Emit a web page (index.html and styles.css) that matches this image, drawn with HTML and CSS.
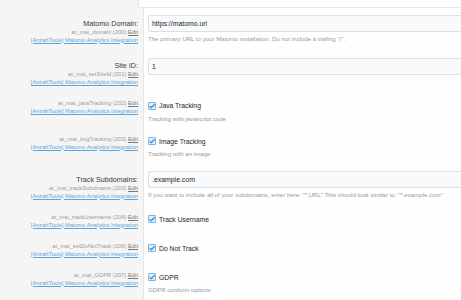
FILE: index.html
```html
<!DOCTYPE html>
<html>
<head>
<meta charset="utf-8">
<link rel="stylesheet" href="styles.css">
</head>
<body>
<div class="form">
  <div class="row top"><div class="lcol"></div><div class="rcol"></div></div>

  <div class="row">
    <div class="lcol">
      <div class="label">Matomo Domain:</div>
      <div class="sub">at_mai_domain (200) <span class="edit">Edit</span></div>
      <div class="addon">[AnzahTools] Matomo Analytics Integration</div>
    </div>
    <div class="rcol">
      <div class="input">https://matomo.url</div>
      <div class="explain">The primary URL to your Matomo installation. Do not include a trailing "/".</div>
    </div>
  </div>

  <div class="row">
    <div class="lcol">
      <div class="label">Site ID:</div>
      <div class="sub">at_mai_setSiteId (201) <span class="edit">Edit</span></div>
      <div class="addon">[AnzahTools] Matomo Analytics Integration</div>
    </div>
    <div class="rcol">
      <div class="input">1</div>
    </div>
  </div>

  <div class="row">
    <div class="lcol nolabel">
      <div class="sub">at_mai_javaTracking (202) <span class="edit">Edit</span></div>
      <div class="addon">[AnzahTools] Matomo Analytics Integration</div>
    </div>
    <div class="rcol">
      <div class="check"><span class="box"><svg viewBox="0 0 8 8" width="8" height="8"><path d="M1.6 4.1 L3.3 5.8 L6.6 2.2" fill="none" stroke="#3d8fd1" stroke-width="1.3"/></svg></span>Java Tracking</div>
      <div class="explain">Tracking with javascript code</div>
    </div>
  </div>

  <div class="row">
    <div class="lcol nolabel">
      <div class="sub">at_mai_imgTracking (203) <span class="edit">Edit</span></div>
      <div class="addon">[AnzahTools] Matomo Analytics Integration</div>
    </div>
    <div class="rcol">
      <div class="check"><span class="box"><svg viewBox="0 0 8 8" width="8" height="8"><path d="M1.6 4.1 L3.3 5.8 L6.6 2.2" fill="none" stroke="#3d8fd1" stroke-width="1.3"/></svg></span>Image Tracking</div>
      <div class="explain">Tracking with an image</div>
    </div>
  </div>

  <div class="row">
    <div class="lcol">
      <div class="label">Track Subdomains:</div>
      <div class="sub">at_mai_trackSubdmains (203) <span class="edit">Edit</span></div>
      <div class="addon">[AnzahTools] Matomo Analytics Integration</div>
    </div>
    <div class="rcol">
      <div class="input">.example.com</div>
      <div class="explain">If you want to include all of your subdomains, enter here: "*.URL" This should look similar to: "*.example.com"</div>
    </div>
  </div>

  <div class="row">
    <div class="lcol nolabel">
      <div class="sub">at_mai_trackUsername (204) <span class="edit">Edit</span></div>
      <div class="addon">[AnzahTools] Matomo Analytics Integration</div>
    </div>
    <div class="rcol">
      <div class="check"><span class="box"><svg viewBox="0 0 8 8" width="8" height="8"><path d="M1.6 4.1 L3.3 5.8 L6.6 2.2" fill="none" stroke="#3d8fd1" stroke-width="1.3"/></svg></span>Track Username</div>
    </div>
  </div>

  <div class="row">
    <div class="lcol nolabel">
      <div class="sub">at_mai_setDoNotTrack (206) <span class="edit">Edit</span></div>
      <div class="addon">[AnzahTools] Matomo Analytics Integration</div>
    </div>
    <div class="rcol">
      <div class="check"><span class="box"><svg viewBox="0 0 8 8" width="8" height="8"><path d="M1.6 4.1 L3.3 5.8 L6.6 2.2" fill="none" stroke="#3d8fd1" stroke-width="1.3"/></svg></span>Do Not Track</div>
    </div>
  </div>

  <div class="row">
    <div class="lcol nolabel">
      <div class="sub">at_mai_GDPR (207) <span class="edit">Edit</span></div>
      <div class="addon">[AnzahTools] Matomo Analytics Integration</div>
    </div>
    <div class="rcol">
      <div class="check"><span class="box"><svg viewBox="0 0 8 8" width="8" height="8"><path d="M1.6 4.1 L3.3 5.8 L6.6 2.2" fill="none" stroke="#3d8fd1" stroke-width="1.3"/></svg></span>GDPR</div>
      <div class="explain">GDPR conform options</div>
    </div>
  </div>
  <div class="row"><div class="lcol"></div><div class="rcol"></div></div>
</div>
</body>
</html>
```
FILE: styles.css
```css
html, body {
  margin: 0;
  padding: 0;
  background: #fefefe;
  overflow: hidden;
  height: 300px;
}
.form {
  font-family: "Liberation Sans", Arial, sans-serif;
  color: #222;
}
.row {
  display: flex;
}
.lcol {
  width: 138px;
  flex: none;
  background: #f5f5f5;
  border-right: 1px solid #e6e6e6;
  padding: 7px 5px 7px 0;
  text-align: right;
}
.lcol.nolabel {
  padding-top: 6px;
}
.rcol {
  flex: 1;
  min-width: 0;
  padding: 7px 0 6px 4px;
}
.row.top .lcol,
.row.top .rcol {
  height: 0;
  padding: 0;
  min-height: 8px;
}
.row.top .rcol {
  border-bottom: 1px solid #e8e8e8;
  min-height: 7px;
}
.label {
  font-size: 7.2px;
  line-height: 9px;
  margin-top: 3.5px;
  color: #3a3a3a;
}
.sub {
  font-size: 5.8px;
  line-height: 8px;
  color: #9a9a9a;
}
.edit {
  color: #777;
  text-decoration: underline;
}
.addon {
  font-size: 5.7px;
  line-height: 8px;
  color: #5aa5de;
  text-decoration: underline;
}
.input {
  box-sizing: border-box;
  width: 330px;
  height: 17px;
  border: 1px solid #dbe0e5;
  border-radius: 2px;
  background: #f8fafc;
  font-size: 6.9px;
  line-height: 15px;
  padding-left: 3px;
  color: #1e1e1e;
}
.explain {
  font-size: 6.1px;
  line-height: 9px;
  color: #9a9a9a;
  margin-top: 1.5px;
}
.check + .explain {
  margin-top: 2.5px;
}
.check {
  display: flex;
  align-items: center;
  font-size: 6.8px;
  line-height: 11px;
  color: #222;
}
.box {
  width: 8px;
  height: 8px;
  box-sizing: border-box;
  border: 1px solid #7ab6e4;
  background: #e3f0fa;
  border-radius: 1px;
  margin-right: 3px;
  display: flex;
  align-items: center;
  justify-content: center;
  overflow: hidden;
}
.box svg {
  flex: none;
}
```
